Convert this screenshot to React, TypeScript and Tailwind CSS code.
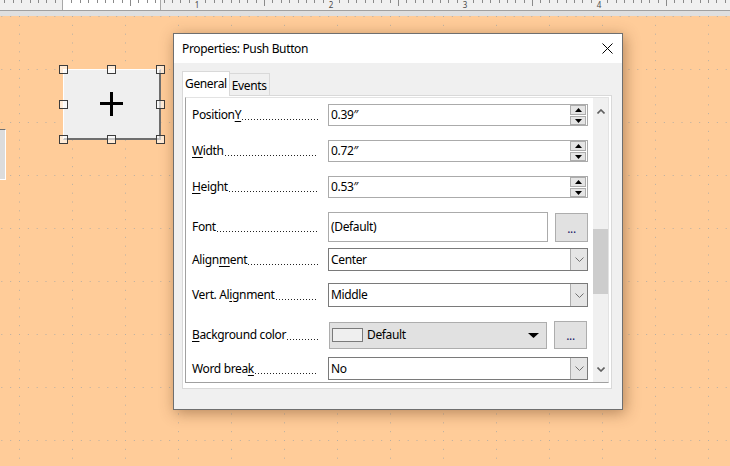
import React from "react";

const TICK = 134 / 16;

const Ruler: React.FC = () => {
  const ticks: React.ReactNode[] = [];
  for (let k = -7; k <= 80; k++) {
    const x = 63 + k * TICK;
    if (x < 0 || x > 730) continue;
    if (k % 16 === 0) {
      if (k > 0)
        ticks.push(
          <text key={k} x={x} y={8} fontSize={8} textAnchor="middle" fill="#4a4a4a" fontFamily="Noto Sans, sans-serif">
            {k / 16}
          </text>
        );
      continue;
    }
    const h = k % 8 === 0 ? 6 : 3;
    ticks.push(<rect key={k} x={Math.round(x)} y={0} width={1} height={h} fill="#8a8a8a" />);
  }
  return (
    <div className="relative h-[16px] shrink-0 bg-[#dfdfdf]">
      <div className="flex h-[11px] border-b border-[#a0a0a0] bg-[#f0f0f0]">
        <div className="w-[63px] border-r border-[#a8a8a8]" />
        <div className="w-[98px] border-r border-[#a8a8a8] bg-white" />
      </div>
      <svg className="absolute left-0 top-0" width={730} height={10}>
        {ticks}
      </svg>
    </div>
  );
};

const GridDots: React.FC = () => {
  const minor = 53 / 6;
  return (
    <svg className="absolute inset-0" width={730} height={450}>
      <defs>
        <pattern id="cm" x={19} y={0} width={53} height={53} patternUnits="userSpaceOnUse">
          {[0, 1, 2, 3, 4, 5].map((i) => (
            <rect key={"h" + i} x={i * minor} y={0} width={1} height={1} fill="#b7aea2" />
          ))}
          {[1, 2, 3, 4, 5].map((i) => (
            <rect key={"v" + i} x={0} y={i * minor} width={1} height={1} fill="#b7aea2" />
          ))}
        </pattern>
      </defs>
      <rect width={730} height={450} fill="url(#cm)" />
    </svg>
  );
};

const Handle: React.FC<{ x: number; y: number }> = ({ x, y }) => (
  <div
    className="absolute h-[9px] w-[9px] border border-[#3c3c3c] bg-white/60"
    style={{ left: x - 4, top: y - 4 }}
  />
);

// label followed by a dotted leader up to the control column
const Label: React.FC<{ children: React.ReactNode }> = ({ children }) => (
  <div className="flex w-[136px] shrink-0 pr-[10px]">
    <span className="whitespace-nowrap">{children}</span>
    <div className="mb-[4px] ml-[1px] h-px flex-1 self-end bg-[linear-gradient(to_right,#222_1px,transparent_1px)] bg-[length:3px_1px] bg-repeat-x" />
  </div>
);

const U: React.FC<{ children: React.ReactNode }> = ({ children }) => (
  <span className="underline decoration-1 underline-offset-[2px]">{children}</span>
);

const Spin = () => (
  <div className="ml-auto mr-[1px] flex h-[20px] w-[16px] flex-col gap-px">
    <div className="flex h-[10px] items-center justify-center border border-[#adadad] bg-[#e5e5e5]">
      <svg width="7" height="4">
        <path d="M0 4 L3.5 0 L7 4 Z" fill="#000" />
      </svg>
    </div>
    <div className="flex h-[9px] items-center justify-center border border-[#adadad] bg-[#e5e5e5]">
      <svg width="7" height="4">
        <path d="M0 0 L3.5 4 L7 0 Z" fill="#000" />
      </svg>
    </div>
  </div>
);

const NumField: React.FC<{ value: string }> = ({ value }) => (
  <div className="flex h-[22px] flex-1 items-center border border-[#ababab] bg-white pl-[2px]">
    <span>{value}</span>
    <Spin />
  </div>
);

const Select: React.FC<{ value: string; h: string }> = ({ value, h }) => (
  <div className={`flex flex-1 items-stretch border border-[#7a7a7a] bg-white ${h}`}>
    <span className="flex flex-1 items-center pl-[2px]">{value}</span>
    <div className="flex w-[17px] items-center justify-center border-l border-[#adadad] bg-[#e5e5e5]">
      <svg width="9" height="5">
        <path d="M0.5 0.5 L4.5 4.5 L8.5 0.5" fill="none" stroke="#707070" strokeWidth="1" />
      </svg>
    </div>
  </div>
);

const DotsButton: React.FC<{ h: string }> = ({ h }) => (
  <div className={`ml-[7px] flex w-[33px] items-end justify-center border border-[#adadad] bg-[#e1e1e1] pb-[6px] text-[12px] leading-none text-[#1a1a66] ${h}`}>
    ...
  </div>
);

const Chevron: React.FC<{ up?: boolean }> = ({ up }) => (
  <svg width="8" height="5">
    <path
      d={up ? "M0.5 4.5 L4 1 L7.5 4.5" : "M0.5 0.5 L4 4 L7.5 0.5"}
      fill="none"
      stroke="#606060"
      strokeWidth="1.6"
    />
  </svg>
);

const PropertiesDialog: React.FC = () => (
  <div className="absolute left-[173px] top-[17px] flex h-[377px] w-[450px] flex-col border border-[#6f6f6f] bg-[#f0f0f0] text-[12px] tracking-[-0.35px] text-black shadow-[2px_3px_14px_rgba(90,50,20,0.45)]">
    <div className="flex h-[29px] shrink-0 items-center justify-between bg-white pl-[8px] pr-[9px]">
      <span>Properties: Push Button</span>
      <svg width="11" height="11">
        <path d="M0.5 0.5 L10.5 10.5 M10.5 0.5 L0.5 10.5" stroke="#000" strokeWidth="1" />
      </svg>
    </div>
    <div className="flex flex-1 flex-col px-[8px] pt-[8px]">
      <div className="flex h-[25px] items-end">
        <div className="relative z-10 flex h-[25px] items-center border border-b-0 border-[#d9d9d9] bg-white pl-[2px] pr-[2px]">
          General
        </div>
        <div className="flex h-[23px] items-center justify-center border border-l-0 border-[#d9d9d9] bg-[#f0f0f0] px-[2px] pt-[2px]">
          Events
        </div>
      </div>
      <div className="-mt-px flex h-[294px] w-[430px] flex-col border border-[#d9d9d9] bg-white pb-[5px] pl-[2px] pr-[2px] pt-[1px]">
        <div className="flex flex-1 border border-[#a0a0a0] border-r-[#e3e3e3] border-t-[#e3e3e3]">
          <div className="flex flex-1 flex-col pl-[6px] pr-[5px] pt-[6px]">
            <div className="flex items-center">
              <Label>
                Position<U>Y</U>
              </Label>
              <NumField value={"0.39\u2033"} />
            </div>
            <div className="mt-[14px] flex items-center">
              <Label>
                <U>W</U>idth
              </Label>
              <NumField value={"0.72\u2033"} />
            </div>
            <div className="mt-[14px] flex items-center">
              <Label>
                <U>H</U>eight
              </Label>
              <NumField value={"0.53\u2033"} />
            </div>
            <div className="mt-[14px] flex items-center">
              <Label>Font</Label>
              <div className="flex h-[30px] w-[220px] items-center border border-[#ababab] bg-white pl-[2px]">
                (Default)
              </div>
              <DotsButton h="h-[29px]" />
            </div>
            <div className="mt-[6px] flex items-center">
              <Label>
                Align<U>m</U>ent
              </Label>
              <Select value="Center" h="h-[23px]" />
            </div>
            <div className="mt-[12px] flex items-center">
              <Label>
                Vert. Al<U>i</U>gnment
              </Label>
              <Select value="Middle" h="h-[24px]" />
            </div>
            <div className="mt-[14px] flex items-center">
              <Label>
                <U>B</U>ackground color
              </Label>
              <div className="ml-[1px] flex h-[27px] w-[218px] items-center border border-[#adadad] bg-[#e1e1e1] pl-[2px] pr-[7px]">
                <div className="h-[14px] w-[31px] border border-[#7a7a7a] bg-[#efefef]" />
                <span className="ml-[4px] flex-1">Default</span>
                <svg width="11" height="5">
                  <path d="M0 0 L11 0 L5.5 5 Z" fill="#000" />
                </svg>
              </div>
              <DotsButton h="h-[28px]" />
            </div>
            <div className="mt-[8px] flex items-center">
              <Label>
                Word brea<U>k</U>
              </Label>
              <Select value="No" h="h-[23px]" />
            </div>
          </div>
          <div className="flex w-[15px] flex-col items-center bg-[#f0f0f0]">
            <div className="flex h-[17px] items-end justify-center pb-px">
              <Chevron up />
            </div>
            <div className="mt-[114px] h-[65px] w-full bg-[#cdcdcd]" />
            <div className="mt-auto flex h-[16px] items-start justify-center pt-[1px]">
              <Chevron />
            </div>
          </div>
        </div>
      </div>
    </div>
  </div>
);

export default function App() {
  return (
    <div className="flex h-[466px] w-[730px] flex-col overflow-hidden font-['Noto_Sans',sans-serif]">
      <Ruler />
      <div className="relative flex-1 bg-[#ffcc99]">
        <GridDots />
        {/* neighbouring control at the left edge */}
        <div className="absolute left-0 top-[113px] h-[51px] w-[6px] border-b border-r border-t border-white border-t-[#707070] bg-[#dcdcdc]" />
        {/* selected push button */}
        <div className="absolute left-[63px] top-[53px] flex h-[71px] w-[98px] items-center justify-center border-b-2 border-l border-r-2 border-t border-b-[#6e6e6e] border-l-white border-r-[#6e6e6e] border-t-white bg-[#efefef]">
          <div className="relative h-[24px] w-[23px]">
            <div className="absolute left-0 top-[10px] h-[3px] w-[23px] bg-black" />
            <div className="absolute left-[10px] top-0 h-[24px] w-[3px] bg-black" />
          </div>
        </div>
        <Handle x={63} y={53} />
        <Handle x={111} y={53} />
        <Handle x={160} y={53} />
        <Handle x={63} y={88} />
        <Handle x={160} y={88} />
        <Handle x={63} y={123} />
        <Handle x={111} y={123} />
        <Handle x={160} y={123} />
        <PropertiesDialog />
      </div>
    </div>
  );
}
